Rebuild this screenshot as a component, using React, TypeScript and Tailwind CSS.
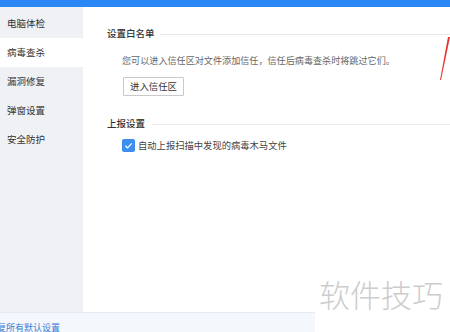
import React from 'react'

const menu = ['电脑体检', '病毒查杀', '漏洞修复', '弹窗设置', '安全防护']

export default function App() {
  return (
    <div
      className="relative w-[450px] h-[332px] overflow-hidden bg-white text-[#333]"
      style={{ fontFamily: '"Noto Sans CJK SC", "Noto Sans", sans-serif' }}
    >
      {/* top bar */}
      <div className="h-[7px] bg-[#2b86f6]" />

      <div className="flex h-[305px]">
        {/* sidebar */}
        <aside className="w-[83px] bg-[#f0f1f5] pt-[2px]">
          {menu.map((item, i) => (
            <div
              key={item}
              className={`h-[29px] flex items-center pl-[7px] text-[9.5px] leading-none ${
                i === 1 ? 'bg-white' : ''
              }`}
            >
              {item}
            </div>
          ))}
        </aside>

        {/* content */}
        <main className="flex-1 pl-[24px] pt-[19px]">
          <div className="flex items-center">
            <span className="text-[9.5px] leading-[14px] font-medium text-[#333]">设置白名单</span>
            <div className="flex-1 h-px bg-[#e8e8e8] ml-[5px] mt-[3px]" />
          </div>
          <p className="mt-[13px] pl-[15px] text-[9.1px] leading-[14px] text-[#666] whitespace-nowrap">
            您可以进入信任区对文件添加信任，信任后病毒查杀时将跳过它们。
          </p>
          <div className="mt-[10px] pl-[16px]">
            <button className="w-[61px] h-[19px] border border-[#c9c9c9] rounded-[1px] bg-white text-[9.4px] leading-none text-[#333] flex items-center justify-center">
              进入信任区
            </button>
          </div>

          <div className="flex items-center mt-[20px]">
            <span className="text-[9.5px] leading-[14px] font-medium text-[#333]">上报设置</span>
            <div className="flex-1 h-px bg-[#ededed] ml-[7px] mt-[3px]" />
          </div>
          <div className="mt-[9px] pl-[15px] flex items-center gap-[3px]">
            <span className="w-[13px] h-[13px] rounded-[2px] bg-[#3d8fef] flex items-center justify-center">
              <svg width="9" height="9" viewBox="0 0 10 10">
                <path d="M1.5 5.2 L4 7.6 L8.6 2.6" fill="none" stroke="white" strokeWidth="1.4" />
              </svg>
            </span>
            <span className="text-[9.3px] leading-[13px] text-[#444]">自动上报扫描中发现的病毒木马文件</span>
          </div>
        </main>
      </div>

      {/* footer */}
      <div className="flex h-[20px]">
        <div className="w-[315px] bg-[#f4f7fb] border-t border-[#e6ebf2] pt-[9px] overflow-hidden">
          <span className="block ml-[-12px] text-[9px] leading-[12px] text-[#3a7bd5] whitespace-nowrap">
            恢复所有默认设置
          </span>
        </div>
      </div>

      {/* watermark */}
      <div className="absolute left-[319px] top-[277px] text-[31px] leading-[34px] font-light text-[#cdcdcd] whitespace-nowrap">
        软件技巧
      </div>

      {/* red arrow */}
      <svg className="absolute left-[436px] top-[36px]" width="14" height="48" viewBox="0 0 14 48">
        <path d="M14 1 L12 1 L4 44 L5 44 Z" fill="#e8332f" />
      </svg>
    </div>
  )
}
